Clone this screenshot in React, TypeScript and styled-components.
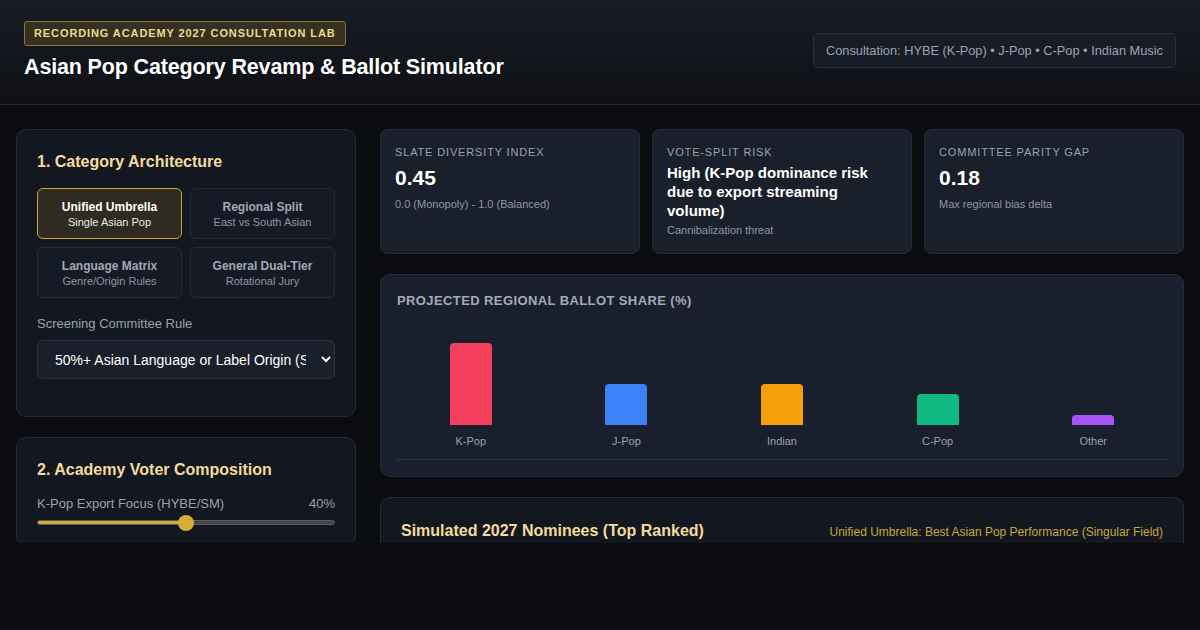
import React, { useState } from "react";
import styled, { createGlobalStyle } from "styled-components";

const Global = createGlobalStyle`
  * { box-sizing: border-box; }
  html, body { margin: 0; padding: 0; background: #0b0c10; }
  body { font-family: "Liberation Sans", Arial, sans-serif; color: #e6e9ef; }
`;

const Page = styled.div`
  height: 630px;
  display: flex;
  flex-direction: column;
  background: #0b0c10;
`;

const Header = styled.header`
  display: flex;
  align-items: center;
  justify-content: space-between;
  padding: 21px 24px 24px;
  background: linear-gradient(180deg, #181c25 0%, #0e1015 100%);
  border-bottom: 1px solid #222838;
`;

const TitleBlock = styled.div`
  display: flex;
  flex-direction: column;
  align-items: flex-start;
  gap: 9px;
`;

const Badge = styled.span`
  display: inline-block;
  padding: 5px 9px 6px;
  font-size: 11px;
  font-weight: 700;
  letter-spacing: 0.9px;
  text-transform: uppercase;
  color: #efd991;
  background: #35301f;
  border: 1px solid #8c7633;
  border-radius: 3px;
`;

const PageTitle = styled.h1`
  margin: 0;
  font-size: 21.5px;
  font-weight: 700;
  color: #ffffff;
  letter-spacing: -0.15px;
`;

const ConsultPill = styled.div`
  padding: 9px 12px;
  font-size: 12.8px;
  color: #9ba3b2;
  background: #171c27;
  border: 1px solid #2a3142;
  border-radius: 5px;
`;

const Main = styled.main`
  height: 438px;
  overflow: hidden;
  display: grid;
  grid-template-columns: 340px 1fr;
  gap: 24px;
  padding: 24px 16px 0;
`;

const Column = styled.div`
  display: flex;
  flex-direction: column;
  gap: 20px;
  min-width: 0;
`;

const Panel = styled.section`
  flex: none;
  background: #131720;
  border: 1px solid #242a37;
  border-radius: 10px;
  padding: 23px 20px 20px;
`;

const PanelTitle = styled.h2`
  margin: 0 0 17px;
  font-size: 16px;
  font-weight: 700;
  color: #f3dc9b;
`;

const OptionGrid = styled.div`
  display: grid;
  grid-template-columns: 1fr 1fr;
  gap: 8px;
  margin-bottom: 18px;
`;

const OptionButton = styled.button<{ $active?: boolean }>`
  display: flex;
  flex-direction: column;
  align-items: center;
  gap: 2px;
  height: 51px;
  justify-content: center;
  padding: 0 8px;
  font-family: inherit;
  cursor: pointer;
  border-radius: 6px;
  background: ${(p) => (p.$active ? "#2f2b21" : "#161a24")};
  border: 1px solid ${(p) => (p.$active ? "#c9a43a" : "#242a37")};
  color: ${(p) => (p.$active ? "#ffffff" : "#a2a9b6")};
`;

const OptionName = styled.span`
  font-size: 12px;
  font-weight: 700;
`;

const OptionSub = styled.span<{ $active?: boolean }>`
  font-size: 11px;
  color: ${(p) => (p.$active ? "#e9ebef" : "#8f97a5")};
`;

const FieldLabel = styled.label`
  display: block;
  font-size: 13px;
  color: #9aa2b0;
  margin-bottom: 9px;
`;

const Select = styled.select`
  display: block;
  width: 100%;
  height: 39px;
  padding: 0 12px 0 13px;
  margin-bottom: 17px;
  font-family: inherit;
  font-size: 14px;
  color: #ffffff;
  background: #1a1f2c;
  border: 1px solid #2c3342;
  border-radius: 6px;
  color-scheme: dark;
  outline: none;
`;

const SliderRow = styled.div`
  display: flex;
  justify-content: space-between;
  font-size: 13px;
  color: #9aa2b0;
  margin-bottom: 9px;
`;

const Range = styled.input`
  -webkit-appearance: none;
  appearance: none;
  display: block;
  width: 100%;
  height: 5px;
  margin: 0;
  border-radius: 3px;
  border: 1px solid #5a5d63;
  outline: none;
  &::-webkit-slider-thumb {
    -webkit-appearance: none;
    appearance: none;
    width: 16px;
    height: 16px;
    border-radius: 50%;
    background: #d4af37;
    border: none;
    cursor: pointer;
  }
`;

const StatRow = styled.div`
  display: grid;
  grid-template-columns: repeat(3, 1fr);
  gap: 12px;
`;

const StatCard = styled.div`
  min-height: 125px;
  padding: 16px 14px 15px;
  background: #1a1f2c;
  border: 1px solid #262d3c;
  border-radius: 8px;
`;

const StatLabel = styled.div`
  font-size: 11px;
  letter-spacing: 0.85px;
  text-transform: uppercase;
  color: #9ba3b3;
`;

const StatValue = styled.div<{ $long?: boolean }>`
  margin-top: ${(p) => (p.$long ? "6px" : "7px")};
  font-size: ${(p) => (p.$long ? "15px" : "21px")};
  line-height: ${(p) => (p.$long ? 1.25 : 1.2)};
  font-weight: 700;
  color: #ffffff;
`;

const StatSub = styled.div<{ $long?: boolean }>`
  margin-top: ${(p) => (p.$long ? "4px" : "8px")};
  font-size: 11px;
  color: #9098a6;
`;

const ChartPanel = styled.section`
  flex: none;
  background: #1a1f2d;
  border: 1px solid #262d3c;
  border-radius: 10px;
  padding: 18px 16px 16px;
`;

const ChartTitle = styled.h3`
  margin: 0;
  font-size: 13px;
  font-weight: 700;
  letter-spacing: 0.4px;
  text-transform: uppercase;
  color: #a3abb9;
`;

const Chart = styled.div`
  display: flex;
  gap: 8px;
  height: 135px;
  margin-top: 17px;
  padding-bottom: 12px;
  border-bottom: 1px solid #2c3242;
`;

const BarCol = styled.div`
  flex: 1;
  display: flex;
  flex-direction: column;
  justify-content: flex-end;
  align-items: center;
  gap: 10px;
`;

const Bar = styled.div<{ $color: string }>`
  width: 42px;
  background: ${(p) => p.$color};
  border-radius: 4px 4px 0 0;
`;

const BarLabel = styled.span`
  font-size: 11px;
  color: #9aa2b0;
`;

const NomineePanel = styled(Panel)`
  padding: 24px 20px 20px;
`;

const NomineeHead = styled.div`
  display: flex;
  justify-content: space-between;
  align-items: baseline;
`;

const NomineeTitle = styled.h2`
  margin: 0;
  font-size: 16px;
  font-weight: 700;
  color: #f3dc9b;
`;

const NomineeNote = styled.span`
  font-size: 12px;
  color: #c9a63c;
`;

const options = [
  { name: "Unified Umbrella", sub: "Single Asian Pop" },
  { name: "Regional Split", sub: "East vs South Asian" },
  { name: "Language Matrix", sub: "Genre/Origin Rules" },
  { name: "General Dual-Tier", sub: "Rotational Jury" },
];

const bars = [
  { label: "K-Pop", h: 82, color: "#f43f5e" },
  { label: "J-Pop", h: 41, color: "#3b82f6" },
  { label: "Indian", h: 41, color: "#f59e0b" },
  { label: "C-Pop", h: 31, color: "#10b981" },
  { label: "Other", h: 10, color: "#a855f7" },
];

export default function App() {
  const [active, setActive] = useState(0);
  const [kpop, setKpop] = useState(40);
  const pct = (kpop / 80) * 100;
  return (
    <Page>
      <Global />
      <Header>
        <TitleBlock>
          <Badge>Recording Academy 2027 Consultation Lab</Badge>
          <PageTitle>Asian Pop Category Revamp &amp; Ballot Simulator</PageTitle>
        </TitleBlock>
        <ConsultPill>Consultation: HYBE (K-Pop) • J-Pop • C-Pop • Indian Music</ConsultPill>
      </Header>
      <Main>
        <Column>
          <Panel>
            <PanelTitle>1. Category Architecture</PanelTitle>
            <OptionGrid>
              {options.map((o, i) => (
                <OptionButton key={o.name} $active={i === active} onClick={() => setActive(i)}>
                  <OptionName>{o.name}</OptionName>
                  <OptionSub $active={i === active}>{o.sub}</OptionSub>
                </OptionButton>
              ))}
            </OptionGrid>
            <FieldLabel>Screening Committee Rule</FieldLabel>
            <Select defaultValue="strict">
              <option value="strict">50%+ Asian Language or Label Origin (Strict)</option>
              <option value="loose">25%+ Asian Language (Loose)</option>
            </Select>
          </Panel>
          <Panel>
            <PanelTitle>2. Academy Voter Composition</PanelTitle>
            <SliderRow>
              <span>K-Pop Export Focus (HYBE/SM)</span>
              <span>{kpop}%</span>
            </SliderRow>
            <Range
              type="range"
              min={0}
              max={80}
              value={kpop}
              onChange={(e) => setKpop(Number(e.target.value))}
              style={{
                background: `linear-gradient(90deg, #d4af37 ${pct}%, #454545 ${pct}%)`,
              }}
            />
          </Panel>
        </Column>
        <Column>
          <StatRow>
            <StatCard>
              <StatLabel>Slate Diversity Index</StatLabel>
              <StatValue>0.45</StatValue>
              <StatSub>0.0 (Monopoly) - 1.0 (Balanced)</StatSub>
            </StatCard>
            <StatCard>
              <StatLabel>Vote-Split Risk</StatLabel>
              <StatValue $long>High (K-Pop dominance risk due to export streaming volume)</StatValue>
              <StatSub $long>Cannibalization threat</StatSub>
            </StatCard>
            <StatCard>
              <StatLabel>Committee Parity Gap</StatLabel>
              <StatValue>0.18</StatValue>
              <StatSub>Max regional bias delta</StatSub>
            </StatCard>
          </StatRow>
          <ChartPanel>
            <ChartTitle>Projected Regional Ballot Share (%)</ChartTitle>
            <Chart>
              {bars.map((b) => (
                <BarCol key={b.label}>
                  <Bar $color={b.color} style={{ height: b.h }} />
                  <BarLabel>{b.label}</BarLabel>
                </BarCol>
              ))}
            </Chart>
          </ChartPanel>
          <NomineePanel>
            <NomineeHead>
              <NomineeTitle>Simulated 2027 Nominees (Top Ranked)</NomineeTitle>
              <NomineeNote>Unified Umbrella: Best Asian Pop Performance (Singular Field)</NomineeNote>
            </NomineeHead>
          </NomineePanel>
        </Column>
      </Main>
    </Page>
  );
}
